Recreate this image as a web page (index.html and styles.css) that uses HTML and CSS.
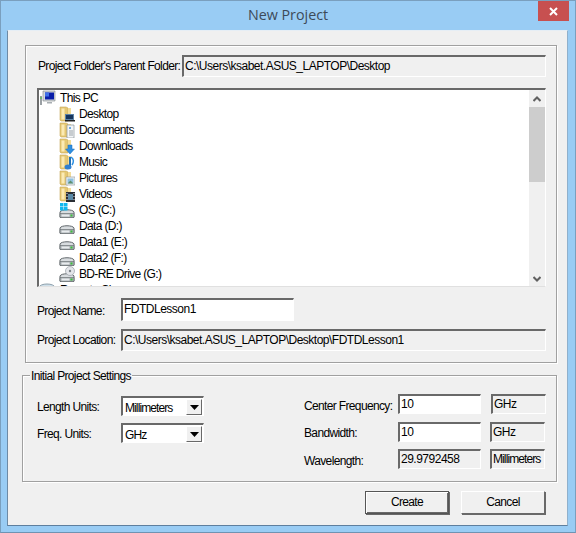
FILE: index.html
```html
<!DOCTYPE html>
<html lang="en">
<head>
<meta charset="utf-8">
<title>New Project</title>
<link rel="stylesheet" href="styles.css">
</head>
<body>
<svg class="defs" width="0" height="0" aria-hidden="true">
  <symbol id="folder" viewBox="0 0 16 16">
    <path d="M1 1h6l2 1v13H2l-1-1z" fill="#e5c873" stroke="#c7a95a" stroke-width=".6"/>
    <path d="M2.500 2.500h3v11h-3z" fill="#fbeab4"/>
    <path d="M9 2h3v9H9z" fill="#f3dc98"/>
  </symbol>
  <symbol id="drive" viewBox="0 0 16 16">
    <path d="M1 10c1-3 13-3 14 0v5l-1 1H2l-1-1z" fill="#d8dcdf" stroke="#62686c"/>
    <path d="M1 11.500h14v4H1z" fill="#a8afb3" stroke="#62686c" stroke-width=".6"/>
    <path d="M2.500 12.500h8v2h-8z" fill="#e8ebed"/>
    <path d="M11.500 12.500h2v2h-2z" fill="#3cc43c"/>
  </symbol>
</svg>
<main class="window">
  <header class="titlebar">
    <h1 class="title">New Project</h1>
    <div class="close"><svg width="11" height="9" viewBox="0 0 11 9"><path d="M2 1l7 7M9 1L2 8" stroke="#fff" stroke-width="2"/></svg></div>
  </header>
  <div class="client">
    <section class="group group-top">
      <div class="row row-parent">
        <label class="label label-parent">Project Folder's Parent Folder:</label>
        <div class="field readonly field-parent">C:\Users\ksabet.ASUS_LAPTOP\Desktop</div>
      </div>
      <div class="tree">
        <ul class="tree-list">
          <li class="node root"><svg class="icon" width="16" height="16" viewBox="0 0 16 16"><path d="M0 6h2v9H0z" fill="#9aa0a4"/><path d="M.5 7h1v2h-1z" fill="#4c4"/><path d="M3 1h12v10H3z" fill="#d5d9dc" stroke="#7c8488" stroke-width=".6"/><path d="M5 2.500h9v7H5z" fill="#0a1ea8"/><path d="M5 2.500h4v4H5z" fill="#3f6fe8"/><path d="M7 12h5v1.500H7z" fill="#a8aeb2"/></svg>This PC</li>
          <li class="node child"><svg class="icon" width="16" height="16" viewBox="0 0 16 16"><use href="#folder"/><path d="M6 8h9v6H6z" fill="#5d83a8"/><path d="M7 9h7v4H7z" fill="#16345c"/><path d="M6 14h10v1.500H6z" fill="#222"/></svg>Desktop</li>
          <li class="node child"><svg class="icon" width="16" height="16" viewBox="0 0 16 16"><use href="#folder"/><path d="M8 3h7v13H8z" fill="#f4f6f8" stroke="#8a9298" stroke-width=".7"/><path d="M10 5h2v2h-2z" fill="#6fa8dc"/><path d="M10 9h4M10 11h4M10 13h4" stroke="#9aa2a8"/></svg>Documents</li>
          <li class="node child"><svg class="icon" width="16" height="16" viewBox="0 0 16 16"><use href="#folder"/><path d="M9 7h4v4h2.500L11 16l-4.500-5H9z" fill="#2f8fe0" stroke="#1f6fb8" stroke-width=".5"/></svg>Downloads</li>
          <li class="node child"><svg class="icon" width="16" height="16" viewBox="0 0 16 16"><use href="#folder"/><path d="M11 3v10" stroke="#1f6fb8" stroke-width="2"/><path d="M12 3c3 2 3 5 1 8" fill="none" stroke="#2f8fe0" stroke-width="1.500"/><ellipse cx="9" cy="13" rx="3.500" ry="2.500" fill="#2f7fd0"/></svg>Music</li>
          <li class="node child"><svg class="icon" width="16" height="16" viewBox="0 0 16 16"><use href="#folder"/><path d="M7 7h9v8H7z" fill="#eef2f4" stroke="#8a9298" stroke-width=".6"/><path d="M8.500 8.500h6v5h-6z" fill="#8fc0e0"/><path d="M8.500 13.500l3-3 3 3z" fill="#5f8f6f"/></svg>Pictures</li>
          <li class="node child"><svg class="icon" width="16" height="16" viewBox="0 0 16 16"><use href="#folder"/><path d="M7 6h9v10H7z" fill="#2a2e34"/><path d="M9 8h5v6H9z" fill="#5a8aa8"/><path d="M7.500 7h1v1h-1zM7.500 10h1v1h-1zM7.500 13h1v1h-1zM14.500 7h1v1h-1zM14.500 10h1v1h-1zM14.500 13h1v1h-1z" fill="#dde"/></svg>Videos</li>
          <li class="node child"><svg class="icon" width="16" height="16" viewBox="0 0 16 16"><use href="#drive"/><path d="M1 1h3.500v3.500H1zM5 1h3.500v3.500H5zM1 5h3.500v3.500H1zM5 5h3.500v3.500H5z" fill="#12b8ee"/></svg>OS (C:)</li>
          <li class="node child"><svg class="icon" width="16" height="16" viewBox="0 0 16 16"><use href="#drive"/></svg>Data (D:)</li>
          <li class="node child"><svg class="icon" width="16" height="16" viewBox="0 0 16 16"><use href="#drive"/></svg>Data1 (E:)</li>
          <li class="node child"><svg class="icon" width="16" height="16" viewBox="0 0 16 16"><use href="#drive"/></svg>Data2 (F:)</li>
          <li class="node child"><svg class="icon" width="16" height="16" viewBox="0 0 16 16"><use href="#drive"/><circle cx="11" cy="5" r="4.500" fill="#e4e6ea" stroke="#8a9298" stroke-width=".6"/><circle cx="11" cy="5" r="1.200" fill="#7a8288"/></svg>BD-RE Drive (G:)</li>
          <li class="node root root-last"><svg class="icon" width="16" height="16" viewBox="0 0 16 16"><ellipse cx="8" cy="5" rx="7.500" ry="3" fill="#cfe0ea" stroke="#8ea0ac"/></svg>Remote Cl</li>
        </ul>
        <div class="scrollbar">
          <svg class="arrow" width="8" height="6" viewBox="0 0 8 6"><path d="M.5 5L4 1.500 7.500 5" fill="none" stroke="#606060" stroke-width="2"/></svg>
          <div class="track"><div class="thumb"></div></div>
          <svg class="arrow" width="8" height="6" viewBox="0 0 8 6"><path d="M.5 1L4 4.500 7.500 1" fill="none" stroke="#606060" stroke-width="2"/></svg>
        </div>
      </div>
      <div class="row row-name">
        <label class="label label-wide label-name">Project Name:</label>
        <div class="field input field-name">FDTDLesson1</div>
      </div>
      <div class="row row-location">
        <label class="label label-wide">Project Location:</label>
        <div class="field readonly field-location">C:\Users\ksabet.ASUS_LAPTOP\Desktop\FDTDLesson1</div>
      </div>
    </section>
    <section class="group group-settings">
      <span class="legend">Initial Project Settings</span>
      <div class="settings-left">
        <div class="row row-select">
          <label class="label label-wide">Length Units:</label>
          <div class="field select"><span class="select-value">Millimeters</span><span class="drop"><svg width="9" height="5" viewBox="0 0 9 5"><path d="M0 0h9L4.500 5z" fill="#000"/></svg></span></div>
        </div>
        <div class="row row-select">
          <label class="label label-wide">Freq. Units:</label>
          <div class="field select"><span class="select-value">GHz</span><span class="drop"><svg width="9" height="5" viewBox="0 0 9 5"><path d="M0 0h9L4.500 5z" fill="#000"/></svg></span></div>
        </div>
      </div>
      <div class="settings-right">
        <label class="label">Center Frequency:</label>
        <div class="field input">10</div>
        <div class="field readonly unit">GHz</div>
        <label class="label">Bandwidth:</label>
        <div class="field input">10</div>
        <div class="field readonly unit unit-shift">GHz</div>
        <label class="label">Wavelength:</label>
        <div class="field readonly">29.9792458</div>
        <div class="field readonly unit unit-shift unit-long">Millimeters</div>
      </div>
    </section>
    <footer class="actions">
      <button class="button button-default">Create</button>
      <button class="button">Cancel</button>
    </footer>
  </div>
</main>
</body>
</html>
```
FILE: styles.css
```css
* { box-sizing: border-box; }
html, body { margin: 0; padding: 0; }
body {
  width: 576px;
  height: 533px;
  overflow: hidden;
  font: 12px/16px "Liberation Sans", Arial, sans-serif;
  letter-spacing: -0.65px;
  color: #000;
  background: #99ccf4;
}
.defs { position: absolute; }
.window {
  width: 576px;
  height: 533px;
  border: 1px solid #7a9fbe;
  border-bottom-color: #6f93b2;
  display: flex;
  flex-direction: column;
}
.titlebar {
  position: relative;
  height: 29px;
  flex: none;
  display: flex;
  align-items: center;
  justify-content: center;
}
.title {
  margin: 0 0 2px;
  font: 400 14.300px/20px "Open Sans", sans-serif;
  letter-spacing: 0;
  color: #3d4a58;
}
.close {
  position: absolute;
  right: 6px;
  top: 0;
  width: 31px;
  height: 20px;
  background: #c75050;
  display: flex;
  align-items: center;
  justify-content: center;
}
.client {
  flex: none;
  margin-left: 6px;
  width: 561px;
  height: 496px;
  background: #f0f0f0;
  border-top: 1px solid #e6eef5;
  border-left: 1px solid #6d8aa5;
  border-right: 1px solid #8fb0cc;
  border-bottom: 1px solid #5e7f9e;
  padding: 14px 8px 0 17px;
  display: flex;
  flex-direction: column;
}
.group {
  flex: none;
  border: 1px solid #a0a0a0;
  box-shadow: inset 1px 1px 0 #fff, 1px 1px 0 #fff;
}
.group-top {
  width: 532px;
  height: 318px;
  padding: 9px 10px 0 11px;
  display: flex;
  flex-direction: column;
}
.row { display: flex; align-items: center; }
.label { display: block; white-space: nowrap; }
.label-parent { width: 145px; padding-left: 1px; }
.label-wide { width: 84px; flex: none; }
.label-name { margin-top: 2px; }
.field {
  height: 22px;
  padding: 0 3px 2px 1px;
  border-top: 2px solid #696969;
  border-left: 2px solid #696969;
  border-right: 1px solid #fff;
  border-bottom: 1px solid #fff;
  display: flex;
  align-items: center;
  white-space: nowrap;
  overflow: hidden;
  letter-spacing: -0.5px;
}
.readonly { background: #f0f0f0; }
.input { background: #fff; }
.field-parent { width: 364px; }
.tree {
  margin-top: 11px;
  width: 509px;
  height: 199px;
  flex: none;
  display: flex;
  background: #fff;
  border-top: 2px solid #696969;
  border-left: 2px solid #696969;
  border-right: 1px solid #fff;
  border-bottom: 1px solid #e0e0e0;
  overflow: hidden;
}
.tree-list {
  flex: 1;
  list-style: none;
  margin: 0;
  padding: 0;
}
.node { height: 16px; display: flex; align-items: center; white-space: nowrap; gap: 4px; }
.icon { flex: none; }
.root { padding-left: 1px; }
.root-last { padding-left: 0; gap: 5px; }
.child { padding-left: 20px; }
.scrollbar {
  width: 16px;
  flex: none;
  display: flex;
  flex-direction: column;
  align-items: center;
  background: #f0f0f0;
}
.arrow { flex: none; margin: 6px 0 4px; }
.track { flex: 1; width: 100%; }
.thumb { width: 100%; height: 75px; margin-top: 1px; background: #cdcdcd; }
.row-name { margin-top: 11px; }
.row-location { margin-top: 8px; }
.field-name { width: 173px; height: 23px; }
.field-location { width: 425px; height: 22px; }
.group-settings {
  position: relative;
  margin-top: 12px;
  margin-left: -3px;
  width: 535px;
  height: 107px;
  padding: 20px 10px 0 14px;
  display: flex;
  justify-content: space-between;
}
.legend {
  position: absolute;
  left: 7px;
  top: -8px;
  padding: 0 1px;
  background: #f0f0f0;
}
.settings-left { display: flex; flex-direction: column; gap: 7px; }
.row-select { height: 20px; }
.row-select .label { margin-top: 1px; }
.select {
  width: 83px;
  height: 20px;
  padding: 0 1px 0 2px;
  background: #fff;
  justify-content: space-between;
}
.select-value { margin-top: 3px; letter-spacing: -0.9px; }
.drop {
  width: 16px;
  height: 16px;
  margin-top: 1px;
  background: #f0f0f0;
  border: 1px solid;
  border-color: #fff #696969 #696969 #fff;
  display: flex;
  align-items: center;
  justify-content: center;
}
.settings-right {
  display: grid;
  grid-template-columns: 84px 83px 55px;
  grid-template-rows: 20px 19px 20px;
  column-gap: 10px;
  row-gap: 8px;
  margin-top: -2px;
}
.settings-right .label { align-self: center; margin-top: 3px; }
.settings-right .field { height: 20px; padding-bottom: 1px; }
.unit-shift { margin: 0 1px 0 -1px; }
.settings-right .unit-long { padding: 0 1px 1px; letter-spacing: -0.9px; }
.actions {
  display: flex;
  justify-content: flex-end;
  gap: 12px;
  margin-top: 9px;
  width: 520px;
}
.button {
  width: 84px;
  height: 23px;
  padding: 0 0 2px;
  font: inherit;
  letter-spacing: inherit;
  color: #000;
  background: #f0f0f0;
  border: 1px solid;
  border-color: #fff #696969 #696969 #fff;
  box-shadow: 1px 1px 0 #696969;
}
.button-default {
  border-color: #555;
  box-shadow: inset 1px 1px 0 #fff, inset -1px -1px 0 #696969, 1px 1px 0 #696969;
}
```
